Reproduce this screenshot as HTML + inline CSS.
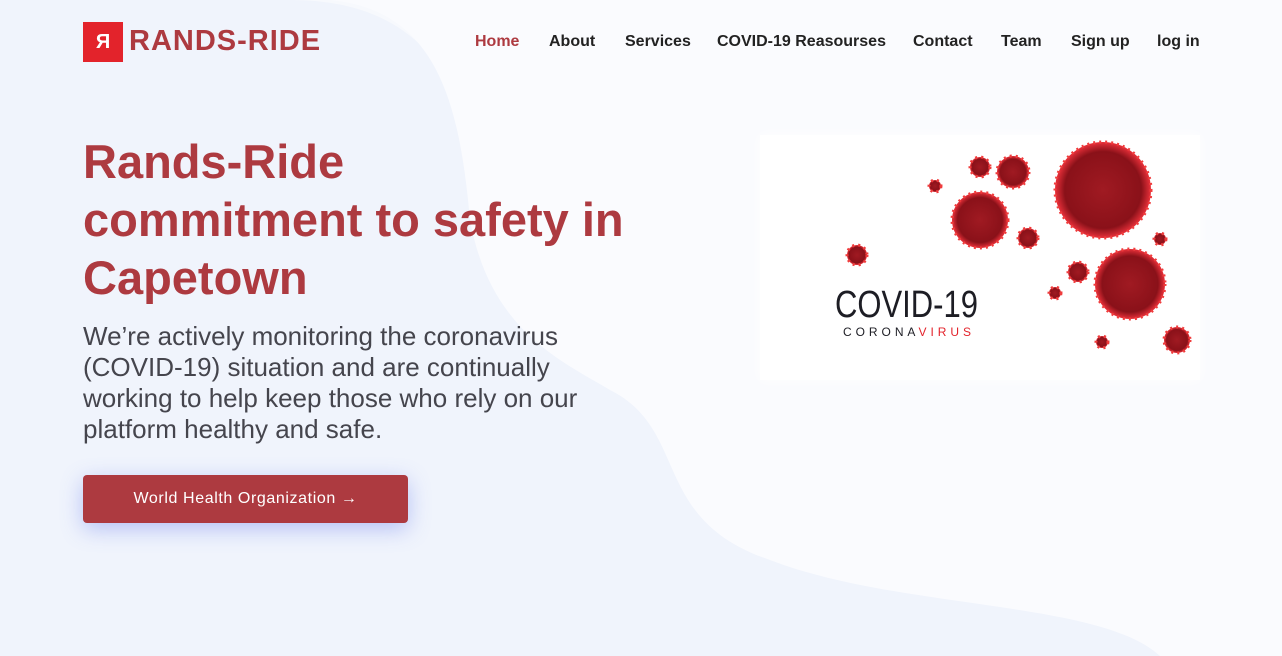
<!DOCTYPE html>
<html><head><meta charset="utf-8"><style>
*{margin:0;padding:0;box-sizing:border-box}
body{width:1282px;height:656px;overflow:hidden;background:#f0f4fc;font-family:"Liberation Sans",sans-serif;position:relative}
.bg{position:absolute;left:0;top:0}
.logo{position:absolute;left:83px;top:22px;width:40px;height:40px;background:#e3232b;color:#fff;font-weight:bold;font-size:20px;text-align:center;line-height:40px}
.brand{position:absolute;left:129px;top:25px;font-size:29px;font-weight:bold;color:#ad3a40;letter-spacing:1px}
.nav a{position:absolute;top:33px;font-size:16px;font-weight:bold;color:#222;text-decoration:none}
h1{position:absolute;left:83px;top:133px;font-size:47px;line-height:58px;color:#ad3a40;font-weight:bold;white-space:nowrap}
p{position:absolute;left:83px;top:321px;font-size:26px;line-height:31px;color:#45454d;width:560px}
.btn{position:absolute;left:83px;top:475px;width:325px;height:48px;background:#ad3a40;border-radius:4px;color:#fff;font-size:16px;letter-spacing:.6px;line-height:48px;text-align:center;box-shadow:0 6px 22px rgba(110,130,240,.45)}
.img{position:absolute;left:760px;top:135px;width:440px;height:245px;background:#fff;box-shadow:0 0 12px #fff}
</style></head><body>
<svg class="bg" width="1282" height="656"><path d="M290 0 C420 0 470 80 480 200 C500 330 560 360 620 390 C700 430 660 500 760 540 C900 600 1150 560 1240 656 L1282 656 L1282 0 Z" fill="#f7f9fd"/><path d="M330 0 C440 10 460 110 470 220 C490 330 560 360 610 390 C690 430 650 520 770 560 C900 610 1100 600 1160 656 L1282 656 L1282 0Z" fill="#fafbfe"/></svg>
<div class="logo">Я</div>
<div class="brand">RANDS-RIDE</div>
<div class="nav">
<a style="left:475px;color:#ad3a40">Home</a><a style="left:549px">About</a><a style="left:625px">Services</a><a style="left:717px">COVID-19 Reasourses</a><a style="left:913px">Contact</a><a style="left:1001px">Team</a><a style="left:1071px">Sign up</a><a style="left:1157px">log in</a>
</div>
<h1>Rands-Ride<br>commitment to safety in<br>Capetown</h1>
<p>We’re actively monitoring the coronavirus (COVID-19) situation and are continually working to help keep those who rely on our platform healthy and safe.</p>
<div class="btn">World Health Organization →</div>
<div class="img"></div>
<svg class="bg" width="1282" height="656">
<defs><radialGradient id="v"><stop offset="0" stop-color="#a01a22"/><stop offset="0.8" stop-color="#8a1119"/><stop offset="1" stop-color="#e8303a"/></radialGradient></defs>
<g fill="url(#v)" stroke="#f03c3c" stroke-width="3" stroke-dasharray="2 4">
<circle cx="1103" cy="190" r="48"/><circle cx="1130" cy="284" r="35"/><circle cx="980" cy="220" r="28"/><circle cx="1013" cy="172" r="16"/><circle cx="980" cy="167" r="10"/><circle cx="935" cy="186" r="6"/><circle cx="1028" cy="238" r="10"/><circle cx="857" cy="255" r="10"/><circle cx="1078" cy="272" r="10"/><circle cx="1055" cy="293" r="6"/><circle cx="1160" cy="239" r="6"/><circle cx="1102" cy="342" r="6"/><circle cx="1177" cy="340" r="13"/>
</g>
<text x="835" y="317" font-family="Liberation Sans Narrow, Liberation Sans, sans-serif" font-size="38" fill="#1d1d24" textLength="143" lengthAdjust="spacingAndGlyphs">COVID-19</text>
<text x="843" y="336" font-family="Liberation Sans, sans-serif" font-size="12" fill="#1d1d24" textLength="128" lengthAdjust="spacing">CORONA<tspan fill="#e3232b">VIRUS</tspan></text>
</svg>
</body></html>
